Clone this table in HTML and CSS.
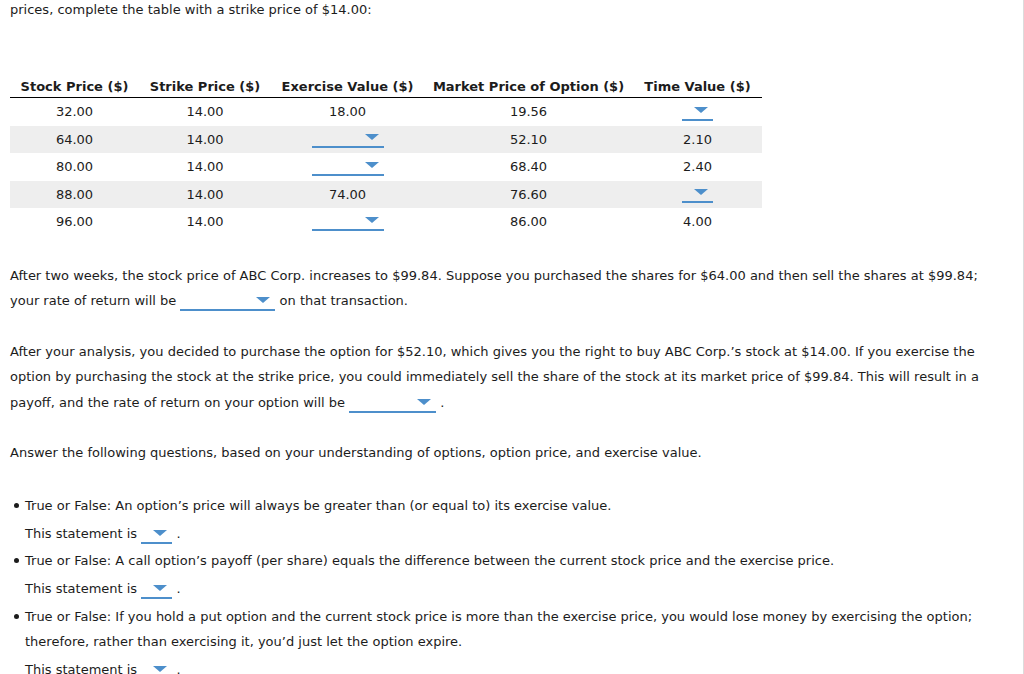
FILE: index.html
```html
<!DOCTYPE html>
<html>
<head>
<meta charset="utf-8">
<link rel="stylesheet" href="styles.css">
</head>
<body>
<div class="page">
  <p class="intro">prices, complete the table with a strike price of $14.00:</p>

  <table class="opt">
    <thead>
      <tr>
        <th class="c1">Stock Price ($)</th>
        <th class="c2">Strike Price ($)</th>
        <th class="c3">Exercise Value ($)</th>
        <th class="c4">Market Price of Option ($)</th>
        <th class="c5">Time Value ($)</th>
      </tr>
    </thead>
    <tbody>
      <tr>
        <td>32.00</td><td>14.00</td><td>18.00</td><td>19.56</td>
        <td><span class="dd dd-sm"></span></td>
      </tr>
      <tr class="alt">
        <td>64.00</td><td>14.00</td><td><span class="dd dd-tbl"></span></td><td>52.10</td>
        <td>2.10</td>
      </tr>
      <tr>
        <td>80.00</td><td>14.00</td><td><span class="dd dd-tbl"></span></td><td>68.40</td>
        <td>2.40</td>
      </tr>
      <tr class="alt">
        <td>88.00</td><td>14.00</td><td>74.00</td><td>76.60</td>
        <td><span class="dd dd-sm"></span></td>
      </tr>
      <tr>
        <td>96.00</td><td>14.00</td><td><span class="dd dd-tbl"></span></td><td>86.00</td>
        <td>4.00</td>
      </tr>
    </tbody>
  </table>

  <p class="para">After two weeks, the stock price of ABC Corp. increases to $99.84. Suppose you purchased the shares for $64.00 and then sell the shares at $99.84;<br>your rate of return will be <span class="dd dd-lg"></span> on that transaction.</p>

  <p class="para">After your analysis, you decided to purchase the option for $52.10, which gives you the right to buy ABC Corp.’s stock at $14.00. If you exercise the<br>option by purchasing the stock at the strike price, you could immediately sell the share of the stock at its market price of $99.84. This will result in a<br>payoff, and the rate of return on your option will be <span class="dd dd-md"></span> .</p>

  <p class="para">Answer the following questions, based on your understanding of options, option price, and exercise value.</p>

  <ul class="tf">
    <li>
      <div class="q">True or False: An option’s price will always be greater than (or equal to) its exercise value.</div>
      <div class="stmt">This statement is <span class="dd dd-sm"></span> .</div>
    </li>
    <li>
      <div class="q">True or False: A call option’s payoff (per share) equals the difference between the current stock price and the exercise price.</div>
      <div class="stmt">This statement is <span class="dd dd-sm"></span> .</div>
    </li>
    <li class="last">
      <div class="q">True or False: If you hold a put option and the current stock price is more than the exercise price, you would lose money by exercising the option;<br>therefore, rather than exercising it, you’d just let the option expire.</div>
      <div class="stmt">This statement is <span class="dd dd-sm"></span> .</div>
    </li>
  </ul>
</div>
</body>
</html>
```

FILE: styles.css
```css
html, body {
  margin: 0;
  padding: 0;
  background: #fff;
}

body {
  font-family: "DejaVu Sans", Verdana, sans-serif;
  font-size: 13px;
  color: #1c1c1c;
}

.page {
  width: 1013px;
  min-height: 674px;
  padding-left: 10px;
  border-right: 1px solid #dcdcdc;
  box-sizing: content-box;
  overflow: hidden;
}

.intro {
  margin: 0;
  line-height: 20px;
}

.opt {
  margin-top: 55px;
  border-collapse: collapse;
  width: 752px;
  table-layout: fixed;
}

.opt .c1 { width: 129px; }
.opt .c2 { width: 132px; }
.opt .c3 { width: 153px; }
.opt .c4 { width: 209px; }
.opt .c5 { width: 129px; }

.opt th {
  font-weight: bold;
  text-align: center;
  height: 22px;
  padding: 0;
  border-bottom: 1px solid #000;
  white-space: nowrap;
  vertical-align: middle;
}

.opt td {
  text-align: center;
  height: 27.5px;
  padding: 0;
  vertical-align: middle;
}

.opt tr.alt td {
  background: #eeeeee;
}

.dd {
  display: inline-block;
  position: relative;
  height: 14px;
  border-bottom: 2px solid #4d8fcb;
  vertical-align: -6px;
}

.dd::after {
  content: "";
  position: absolute;
  right: 5px;
  top: 2px;
  border-left: 7px solid transparent;
  border-right: 7px solid transparent;
  border-top: 6px solid #4d8fcb;
}

.dd-tbl { width: 72px; }
.dd-sm { width: 31px; }
.dd-lg { width: 95px; }
.dd-md { width: 87px; }

.para {
  margin: 25px 0 0;
  line-height: 25.6px;
  white-space: nowrap;
}

.opt + .para {
  margin-top: 27px;
}

.tf {
  list-style: none;
  margin: 27px 0 0;
  padding: 0;
}

.tf li {
  position: relative;
  padding-left: 15px;
  line-height: 25px;
  white-space: nowrap;
}

.tf li + li {
  margin-top: 1.5px;
}

.tf li.last {
  margin-top: 3px;
}

.tf li::before {
  content: "";
  position: absolute;
  left: 4px;
  top: 10px;
  width: 5px;
  height: 5px;
  border-radius: 50%;
  background: #1c1c1c;
}

.tf .stmt {
  margin-top: 3px;
}
```
